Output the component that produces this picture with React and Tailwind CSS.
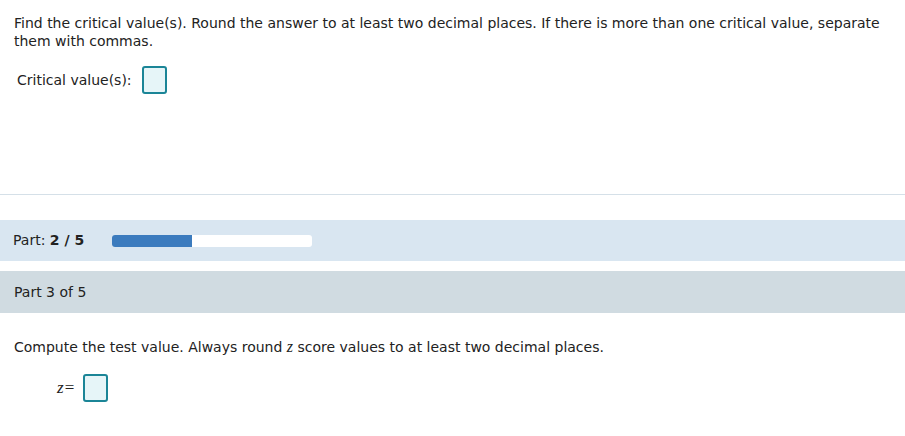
export default function App() {
  return (
    <div className="w-[905px] h-[436px] bg-white text-[14px] text-[#222] overflow-hidden" style={{ fontFamily: '"DejaVu Sans", Verdana, sans-serif' }}>
      {/* Part 2 question */}
      <div className="px-[14px] pt-[14px] h-[194px]">
        <p className="leading-[18px]">
          Find the critical value(s). Round the answer to at least two decimal places. If there is more than one critical value, separate them with commas.
        </p>
        <div className="flex items-center mt-[16px] ml-[3px]">
          <span className="w-[125px] shrink-0 whitespace-nowrap">Critical value(s):</span>
          <span className="w-[25px] h-[28px] rounded-[3px] border-2 border-[#1b8597] bg-[#e6f5f8]" />
        </div>
      </div>
      <div className="h-px bg-[#d5e0e8]" />

      {/* progress */}
      <div className="mt-[25px] h-[41px] bg-[#d9e6f1] flex items-center px-[13px]">
        <span className="w-[99px] shrink-0 whitespace-nowrap">
          Part: <b className="font-bold">2 / 5</b>
        </span>
        <div className="w-[200px] h-[12px] bg-white rounded-[3px] overflow-hidden">
          <div className="w-[80px] h-full bg-[#3b7bbe]" />
        </div>
      </div>

      <div className="mt-[10px] h-[42px] bg-[#d0dbe1] flex items-center px-[14px]">
        <span>Part 3 of 5</span>
      </div>

      {/* Part 3 question */}
      <div className="px-[14px] pt-[25px]">
        <p className="leading-[18px]">
          Compute the test value. Always round <i className="italic text-[16px]" style={{ fontFamily: '"Liberation Serif", serif' }}>z</i> score values to at least two decimal places.
        </p>
        <div className="flex items-center mt-[18px] ml-[43px]" style={{ fontFamily: '"Liberation Serif", serif' }}>
          <span className="w-[26px] shrink-0 text-[17px] whitespace-nowrap">
            <i className="italic">z</i>
            <span className="ml-[1px]">=</span>
          </span>
          <span className="w-[25px] h-[28px] rounded-[3px] border-2 border-[#1b8597] bg-[#e6f5f8]" />
        </div>
      </div>
    </div>
  );
}
